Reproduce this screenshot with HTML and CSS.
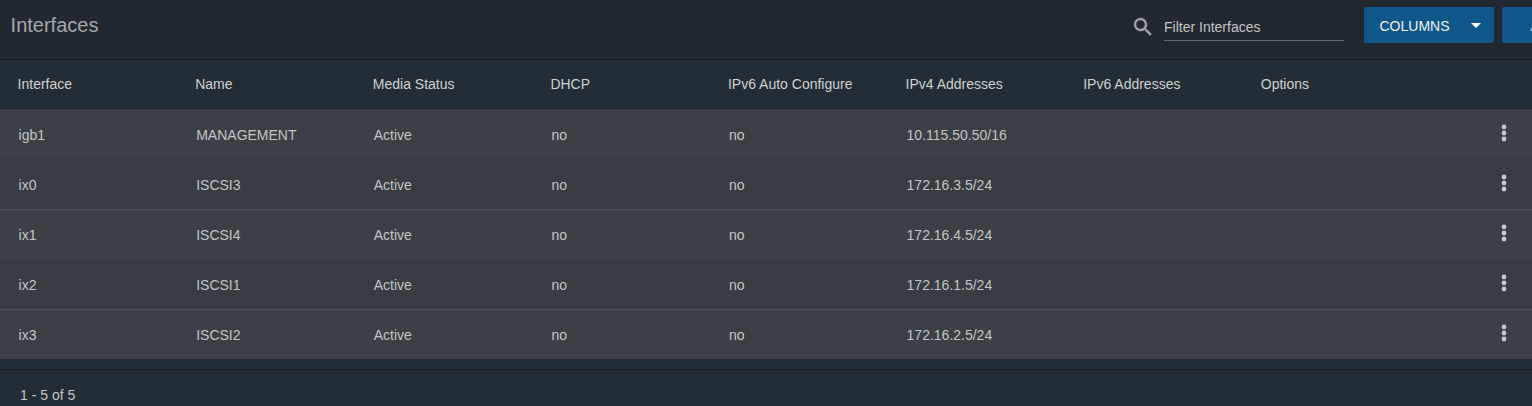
FILE: index.html
```html
<!DOCTYPE html>
<html lang="en">
<head>
    <meta charset="UTF-8">
    <title>Interfaces</title>
    <link rel="stylesheet" href="styles.css">
</head>
<body>
    <div class="toolbar">
        <h1>Interfaces</h1>
        <div class="search">
            <svg class="search-icon" viewBox="0 0 24 24"><path d="M15.5 14h-.79l-.28-.27A6.47 6.47 0 0 0 16 9.5 6.5 6.5 0 1 0 9.5 16c1.61 0 3.09-.59 4.23-1.57l.27.28v.79l5 4.99L20.49 19l-4.99-5zm-6 0C7.01 14 5 11.99 5 9.5S7.01 5 9.5 5 14 7.01 14 9.5 11.99 14 9.5 14z"/></svg>
            <input type="text" placeholder="Filter Interfaces">
        </div>
        <button class="columns">COLUMNS <span class="caret"></span></button>
        <button class="add">ADD</button>
    </div>

    <div class="row header">
        <span>Interface</span>
        <span>Name</span>
        <span>Media Status</span>
        <span>DHCP</span>
        <span>IPv6 Auto Configure</span>
        <span>IPv4 Addresses</span>
        <span>IPv6 Addresses</span>
        <span>Options</span>
    </div>

    <div class="rows" id="rows"></div>

    <div class="footer">1 - 5 of 5</div>

    <script>
        const interfaces = [
            ['igb1', 'MANAGEMENT', '10.115.50.50/16'],
            ['ix0', 'ISCSI3', '172.16.3.5/24'],
            ['ix1', 'ISCSI4', '172.16.4.5/24'],
            ['ix2', 'ISCSI1', '172.16.1.5/24'],
            ['ix3', 'ISCSI2', '172.16.2.5/24']
        ];

        document.getElementById('rows').innerHTML = interfaces.map(([id, name, ip]) => `
            <div class="row">
                <span>${id}</span>
                <span>${name}</span>
                <span>Active</span>
                <span>no</span>
                <span>no</span>
                <span>${ip}</span>
                <span></span>
                <span></span>
                <svg class="more" viewBox="0 0 6 18"><circle cx="3" cy="3" r="2.4"/><circle cx="3" cy="9" r="2.4"/><circle cx="3" cy="15" r="2.4"/></svg>
            </div>`).join('');
    </script>
</body>
</html>
```
FILE: styles.css
```css
* {
    box-sizing: border-box;
}
body {
    margin: 0;
    height: 406px;
    overflow: hidden;
    background-color: #232d35;
    color: #c3c5c7;
    font-family: "Liberation Sans", Arial, sans-serif;
    font-size: 14px;
}
.toolbar {
    display: flex;
    align-items: flex-start;
    height: 60px;
    padding: 7px 0 0 10.6px;
    background-color: #212830;
    border-bottom: 1px solid #171f26;
}
h1 {
    margin: 6px auto 0 0;
    font-size: 20px;
    line-height: 24px;
    font-weight: normal;
    color: #a5a7a9;
}
.search {
    display: flex;
    flex: none;
    margin-right: 20px;
}
.search-icon {
    width: 24px;
    height: 24px;
    margin: 8px 9px 0 0;
    fill: #a3a6a8;
    stroke: #a3a6a8;
    stroke-width: 0.4;
}
.search input {
    width: 180px;
    height: 34px;
    padding: 6px 0 0;
    border: none;
    border-bottom: 1px solid #646a70;
    background: none;
    font: inherit;
}
.search input::placeholder {
    color: #c3c5c7;
}
button {
    display: flex;
    flex: none;
    align-items: center;
    height: 36px;
    padding: 2px 0 0 15.5px;
    border: none;
    border-radius: 2px;
    background-color: #0f5789;
    color: #f0f3f5;
    font: inherit;
}
.columns {
    width: 130px;
    margin-right: 8px;
}
.caret {
    margin: -1px 0 0 21px;
    border: 5px solid transparent;
    border-top-color: #fff;
    border-bottom: none;
}
.add {
    width: 80px;
    margin-right: -50px;
    padding-left: 28.5px;
}
.row {
    display: grid;
    grid-template-columns: repeat(8, 177.6px) 1fr;
    align-items: center;
    height: 50px;
    padding-left: 18.6px;
}
.header {
    height: 49px;
    padding-left: 17.6px;
    color: #cfd1d3;
    border-bottom: 1px solid #1e262c;
}
.rows .row {
    height: 49px;
    padding-top: 3px;
    background-color: #3a4045;
}
.rows .row:nth-child(even) {
    height: 52px;
    padding-top: 2px;
    background-color: #373d43;
    border-bottom: 1px solid #4b5256;
}
.rows .row:nth-child(3) {
    height: 48px;
    padding-top: 2px;
}
.rows .row:nth-child(5) {
    padding-top: 1px;
}
.more {
    width: 6px;
    height: 18px;
    margin: -4px 0 0 62px;
    fill: #c6c9cb;
}
.rows .row:nth-child(even) .more {
    margin-top: -3px;
}
.footer {
    margin-top: 10px;
    padding: 17px 20px;
    border-top: 1px solid #171f26;
}
```
